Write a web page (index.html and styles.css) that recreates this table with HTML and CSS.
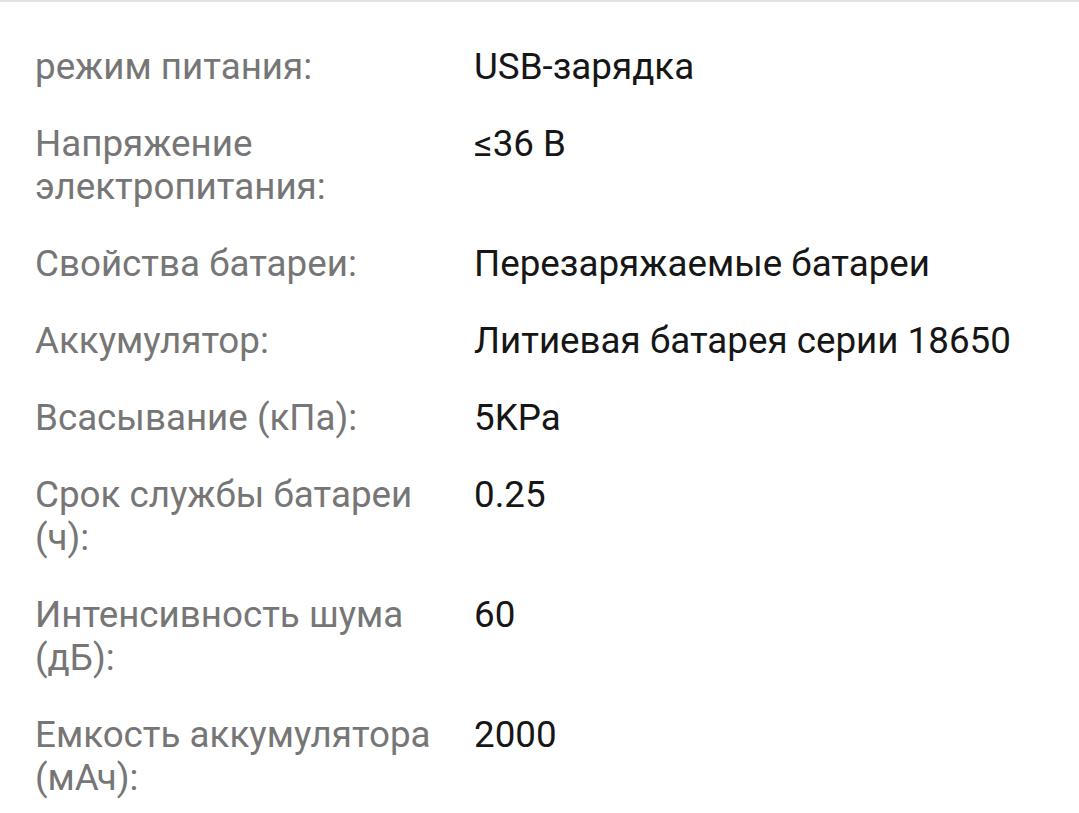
FILE: index.html
```html
<!DOCTYPE html>
<html lang="ru">
<head>
<meta charset="utf-8">
<link rel="stylesheet" href="styles.css">
</head>
<body>
<div class="specs">
  <div class="row"><div class="label">режим питания:</div><div class="value">USB-зарядка</div></div>
  <div class="row"><div class="label">Напряжение электропитания:</div><div class="value">≤36 В</div></div>
  <div class="row"><div class="label">Свойства батареи:</div><div class="value">Перезаряжаемые батареи</div></div>
  <div class="row"><div class="label">Аккумулятор:</div><div class="value">Литиевая батарея серии 18650</div></div>
  <div class="row"><div class="label">Всасывание (кПа):</div><div class="value">5KPa</div></div>
  <div class="row"><div class="label">Срок службы батареи (ч):</div><div class="value">0.25</div></div>
  <div class="row"><div class="label">Интенсивность шума (дБ):</div><div class="value">60</div></div>
  <div class="row"><div class="label">Емкость аккумулятора (мАч):</div><div class="value">2000</div></div>
</div>
</body>
</html>
```
FILE: styles.css
```css
html, body {
  margin: 0;
  padding: 0;
  background: #ffffff;
}
body {
  font-family: Roboto, "Noto Sans", sans-serif;
  border-top: 2px solid #e2e2e2;
}
.specs {
  display: flex;
  flex-direction: column;
  gap: 34px;
  padding: 43px 20px 0 35px;
}
.row {
  display: grid;
  grid-template-columns: 439px 1fr;
  font-size: 36.75px;
  line-height: 43px;
}
.label {
  color: #767676;
  padding-right: 25px;
}
.value {
  color: #161616;
}
```
